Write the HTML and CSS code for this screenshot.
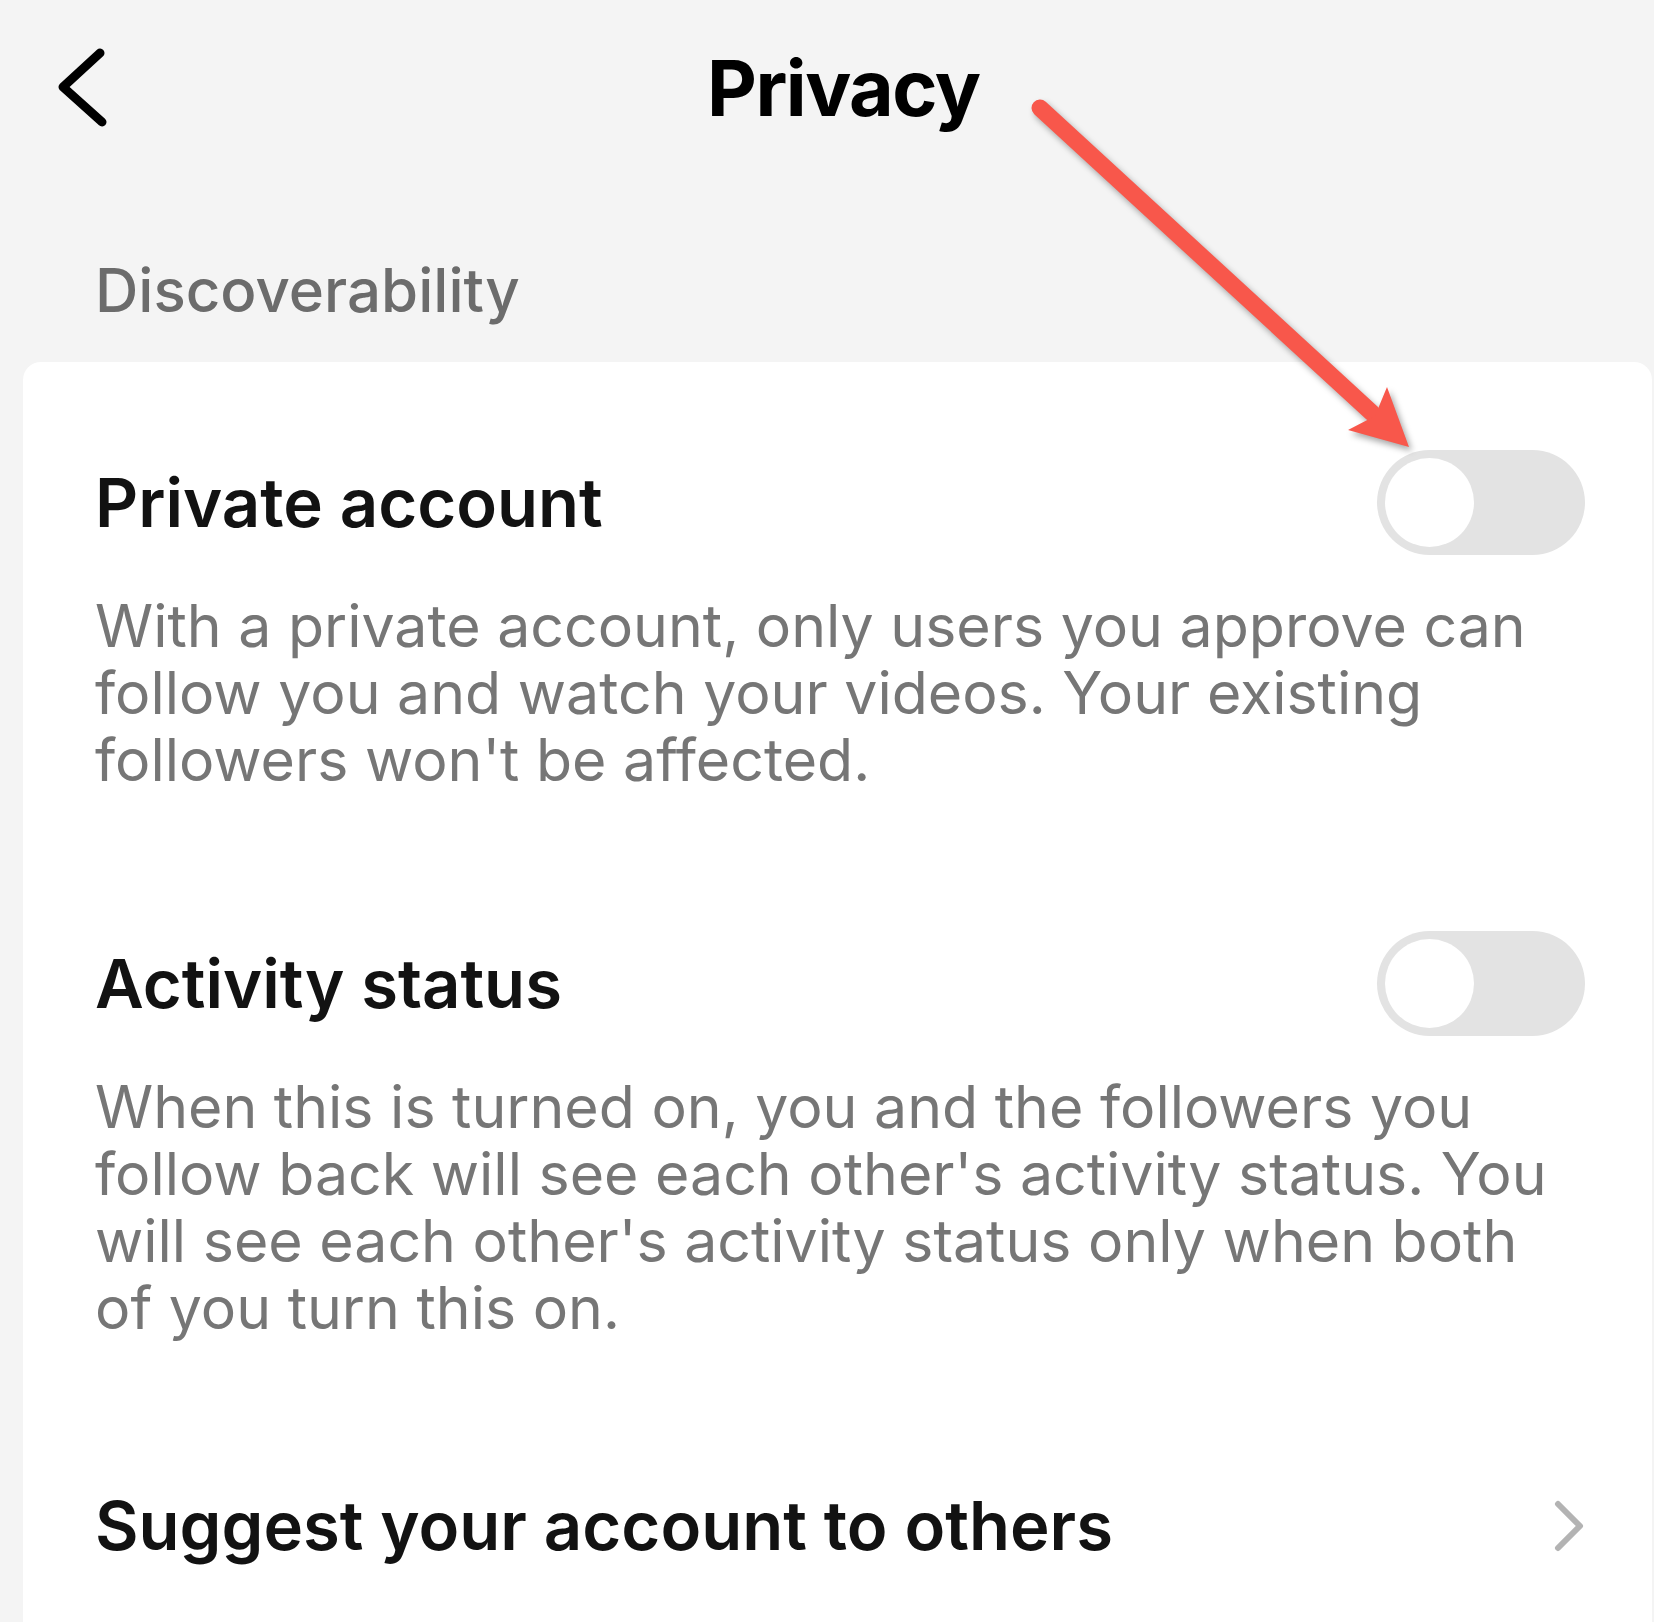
FILE: index.html
```html
<!DOCTYPE html>
<html lang="en">
<head>
    <meta charset="UTF-8">
    <meta name="viewport" content="width=device-width, initial-scale=1.0">
    <title>Privacy</title>
    <link rel="stylesheet" href="styles.css">
</head>
<body>
    <header class="top-bar">
        <svg class="back-icon" width="56" height="80" viewBox="0 0 56 80">
            <polyline points="44,5 7,39 46,74" />
        </svg>
        <h1>Privacy</h1>
    </header>

    <h2 class="section-title">Discoverability</h2>

    <main class="card">
        <!-- Private account -->
        <div class="setting-row">
            <span class="setting-name">Private account</span>
            <span class="toggle"><span class="toggle-knob"></span></span>
        </div>
        <p class="setting-desc">With a private account, only users you approve can follow you and watch your videos. Your existing followers won't be affected.</p>

        <!-- Activity status -->
        <div class="setting-row">
            <span class="setting-name">Activity status</span>
            <span class="toggle"><span class="toggle-knob"></span></span>
        </div>
        <p class="setting-desc">When this is turned on, you and the followers you follow back will see each other's activity status. You will see each other's activity status only when both of you turn this on.</p>

        <!-- Suggest account -->
        <div class="setting-row link-row">
            <span class="setting-name">Suggest your account to others</span>
            <svg class="chevron" width="36" height="56" viewBox="0 0 36 56">
                <polyline points="9,6 31,28 9,50" />
            </svg>
        </div>
    </main>

    <!-- annotation arrow -->
    <svg class="arrow" width="420" height="380" viewBox="0 0 420 380">
        <line x1="20" y1="18" x2="352" y2="323" />
        <polygon points="389,357 328,340 355,326 367,297" />
    </svg>
</body>
</html>
```

FILE: styles.css
```css
/* General Styles */
body {
    margin: 0;
    font-family: 'Inter', 'Liberation Sans', sans-serif;
    background: #f4f4f4;
    color: #121212;
    height: 1622px;
    overflow: hidden;
}
.top-bar {
    display: flex;
    align-items: center;
    height: 80px;
    padding: 48px 0 0 56px;
}
.back-icon polyline {
    fill: none;
    stroke: #000;
    stroke-width: 9;
    stroke-linecap: round;
    stroke-linejoin: round;
}
.top-bar h1 {
    margin: 0 0 0 595px;
    font-size: 77px;
    line-height: 80px;
    font-weight: 700;
    letter-spacing: -1.5px;
    color: #000;
}
.section-title {
    margin: 127px 0 37px 95px;
    font-size: 60px;
    line-height: 70px;
    font-weight: 500;
    color: #6c6c6c;
}
/* Settings Card */
.card {
    margin-left: 23px;
    width: 1629px;
    box-sizing: border-box;
    padding: 88px 67px 0 72px;
    min-height: 1300px;
    background: white;
    border-radius: 18px 18px 0 0;
}
.setting-row {
    display: flex;
    justify-content: space-between;
    align-items: center;
    height: 105px;
}
.setting-name {
    font-size: 67px;
    line-height: 105px;
    font-weight: 600;
}
.setting-desc {
    margin: 37px 0 138px;
    font-size: 59px;
    line-height: 67px;
    color: #767676;
}
.link-row {
    margin-top: -6px;
}
.toggle {
    width: 208px;
    height: 105px;
    border-radius: 53px;
    background: #e3e3e3;
    display: flex;
    align-items: center;
    padding-left: 8px;
    box-sizing: border-box;
}
.toggle-knob {
    width: 89px;
    height: 89px;
    border-radius: 50%;
    background: white;
}
.chevron polyline {
    fill: none;
    stroke: #b3b3b3;
    stroke-width: 6;
    stroke-linecap: round;
    stroke-linejoin: round;
}
/* Annotation Arrow */
.arrow {
    position: absolute;
    left: 1020px;
    top: 90px;
    filter: drop-shadow(3px 4px 3px rgba(0, 0, 0, 0.35));
}
.arrow line {
    stroke: #f8574b;
    stroke-width: 17;
    stroke-linecap: round;
}
.arrow polygon {
    fill: #f8574b;
}
```
